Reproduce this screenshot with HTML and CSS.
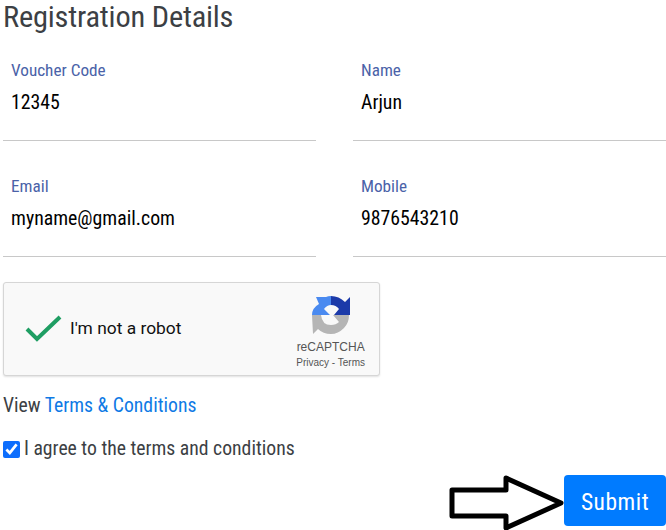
FILE: index.html
```html
<!DOCTYPE html>
<html lang="en">
<head>
<meta charset="utf-8">
<title>Registration Details</title>
<link rel="stylesheet" href="styles.css">
</head>
<body>
<main class="page">
  <h1 class="title">Registration Details</h1>
  <div class="fields">
    <div class="field"><label class="label">Voucher Code</label><div class="value">12345</div></div>
    <div class="field"><label class="label">Name</label><div class="value">Arjun</div></div>
    <div class="field"><label class="label">Email</label><div class="value">myname@gmail.com</div></div>
    <div class="field"><label class="label">Mobile</label><div class="value">9876543210</div></div>
  </div>
  <div class="captcha">
    <svg class="captcha-check" width="38" height="28" viewBox="0 0 38 28"><path d="M2 15 L12 25 L35 3" fill="none" stroke="#1f9e63" stroke-width="4"/></svg>
    <span class="captcha-text">I'm not a robot</span>
    <div class="captcha-brand">
      <svg class="captcha-logo" width="38" height="38" viewBox="0 0 38 38">
        <path d="M0 19 H9 Q10 29 19 29 Q24 29 27 26 L21 19 H37 Q37 27 32 32 Q26 38 19 38 Q11 38 6 33 L1 38 Z" fill="#b5b5b5"/>
        <path d="M19 0 V9 Q15 9 12 13 L18 19 H0 Q0 12 7 8 L4 1 H14 Q16 0 19 0 Z" fill="#4a8af0"/>
        <path d="M19 0 Q27 0 33 6 L38 1 V19 H22 L27 13 Q24 9 19 9 Z" fill="#1c3aa9"/>
      </svg>
      <div class="captcha-name">reCAPTCHA</div>
      <div class="captcha-links">Privacy - Terms</div>
    </div>
  </div>
  <p class="terms">View <a class="terms-link" href="#">Terms &amp; Conditions</a></p>
  <label class="agree"><input class="agree-box" type="checkbox" checked> I agree to the terms and conditions</label>
  <div class="actions">
    <svg class="arrow" width="116" height="56" viewBox="0 0 116 56"><path d="M3 15 H57 V3 L112 28 L57 53 V41 H3 Z" fill="#fff" stroke="#000" stroke-width="5" stroke-linejoin="round"/></svg>
    <button class="submit" type="button">Submit</button>
  </div>
</main>
</body>
</html>
```
FILE: styles.css
```css
* { box-sizing: border-box; }
html, body { margin: 0; padding: 0; background: #fff; }
body {
  width: 666px;
  height: 530px;
  overflow: hidden;
  font-family: Roboto, "Liberation Sans", sans-serif;
  color: #3c3f44;
}
.page { padding: 0 0 0 3px; }
.title {
  margin: 0;
  font-size: 30.4px;
  line-height: 34px;
  font-weight: 400;
  font-stretch: 75%;
  letter-spacing: -0.2px;
}
.fields {
  display: grid;
  grid-template-columns: 313px 313px;
  column-gap: 37px;
  margin-top: 8px;
}
.field {
  height: 116px;
  padding: 35px 8px 0;
  border-bottom: 1px solid #c8c8c8;
}
.fields .field:nth-child(-n+2) { height: 99px; padding-top: 18px; }
.label {
  display: block;
  font-size: 17.2px;
  line-height: 21px;
  color: #4a62a8;
  font-stretch: 75%;
}
.value {
  margin-top: 11px;
  font-size: 19.8px;
  line-height: 22px;
  color: #000;
  font-stretch: 75%;
}
.captcha {
  display: flex;
  align-items: center;
  width: 377px;
  height: 94px;
  margin-top: 25px;
  padding: 0 14px 0 21px;
  background: #f9f9f9;
  border: 1px solid #d6d6d6;
  border-radius: 3px;
  box-shadow: 0 1px 2px rgba(0,0,0,.12);
}
.captcha-check { flex: none; margin-top: -3px; }
.captcha-text {
  margin-left: 7px;
  font-size: 17.4px;
  color: #111;
  margin-top: -2px;
}
.captcha-brand {
  margin-left: auto;
  display: flex;
  flex-direction: column;
  align-items: center;
  font-family: "Liberation Sans", sans-serif;
  color: #555;
  padding-top: 6px;
}
.captcha-logo { display: block; }
.captcha-name { font-size: 12px; line-height: 14px; margin-top: 6px; }
.captcha-links { font-size: 10px; line-height: 12px; margin-top: 3px; }
.terms {
  margin: 19px 0 0;
  font-size: 19.7px;
  line-height: 22px;
  font-stretch: 75%;
}
.terms-link { color: #0f7ae5; text-decoration: none; }
.agree {
  display: flex;
  align-items: center;
  gap: 4px;
  margin-top: 21px;
  font-size: 19.7px;
  line-height: 22px;
  font-stretch: 75%;
}
.agree-box {
  width: 17px;
  height: 17px;
  margin: 0;
  accent-color: #0d6efd;
}
.actions {
  display: flex;
  justify-content: flex-end;
  align-items: center;
  margin-top: 14px;
  height: 56px;
}
.arrow { flex: none; margin-right: -1px; margin-top: 2px; }
.submit {
  width: 102px;
  height: 51px;
  border: 0;
  border-radius: 4px;
  background: #007bff;
  color: #fff;
  font-family: Roboto, sans-serif;
  font-stretch: 75%;
  font-size: 23.5px;
  margin-top: -4px;
  padding-top: 4px;
  letter-spacing: 0.5px;
}
```
